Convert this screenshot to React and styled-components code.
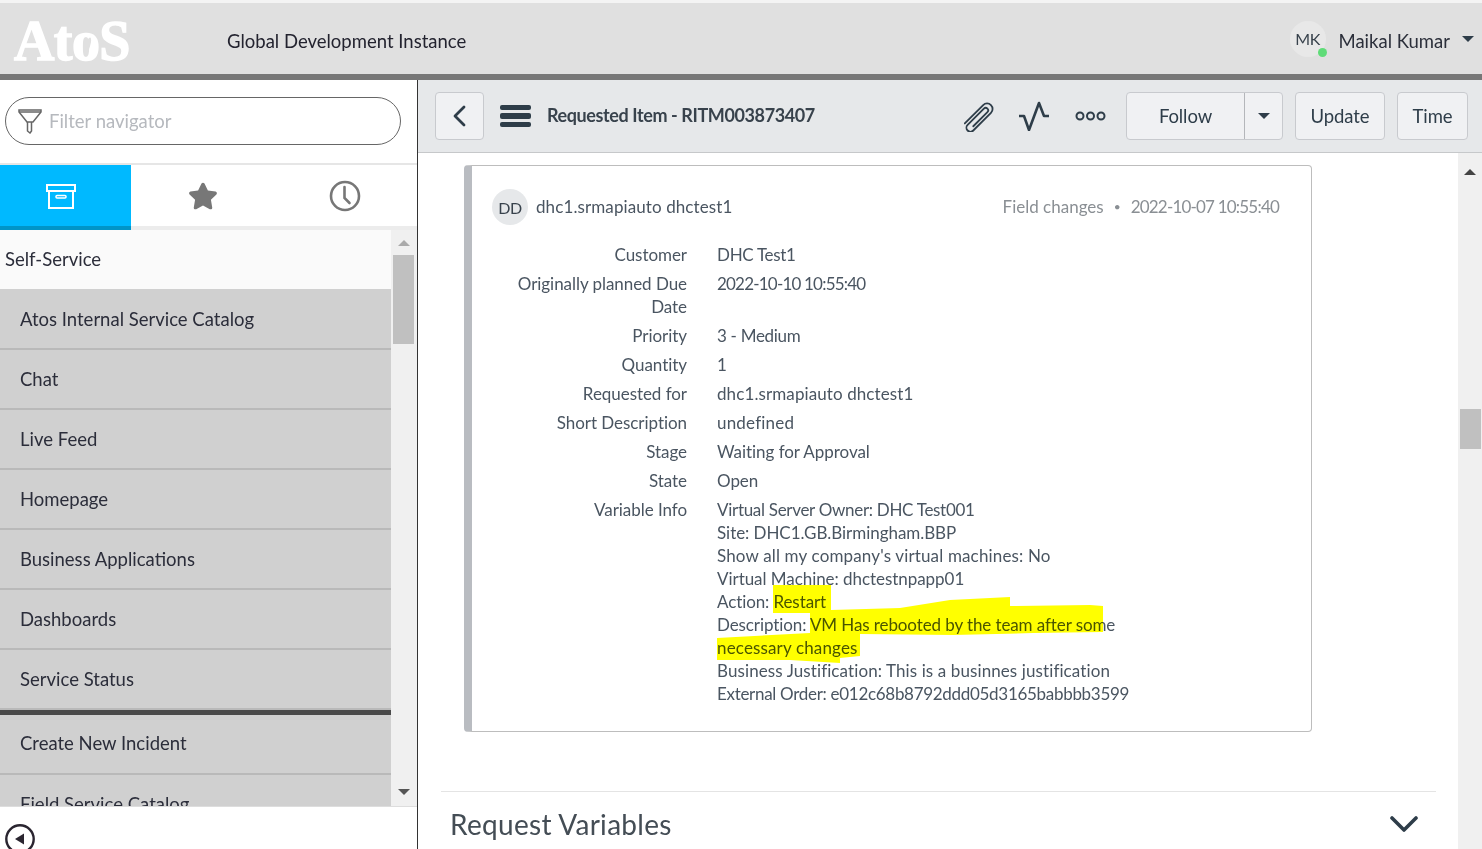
import React from "react";
import styled, { createGlobalStyle } from "styled-components";
import { FaStar } from "react-icons/fa";

const FONT = `Lato, "Noto Sans", sans-serif`;

const GlobalStyle = createGlobalStyle`
  html, body {
    margin: 0;
    height: 100%;
    overflow: hidden;
    background: #fff;
    font-family: ${FONT};
  }
  * { box-sizing: border-box; }
`;

const Page = styled.div`
  position: relative;
  display: flex;
  flex-direction: column;
  height: 849px;
  overflow: hidden;
`;

const Header = styled.header`
  flex: none;
  height: 80px;
  display: flex;
  align-items: center;
  padding: 0 8px 0 14px;
  background: #e0e0e0;
  border-top: 3px solid #f4f4f4;
  border-bottom: 6px solid #777;
`;

const Logo = styled.div`
  width: 213px;
  margin-top: 5px;
  font: bold 56px/1 "Liberation Serif", serif;
  letter-spacing: -0.6px;
  color: #fff;
  -webkit-text-stroke: 1.4px #fff;
`;

const LogoO = styled.span`
  position: relative;
  &::after {
    content: "";
    position: absolute;
    left: 13px;
    top: 27px;
    width: 5px;
    height: 18px;
    border-radius: 50%;
    background: #e0e0e0;
    transform: rotate(18deg);
  }
`;

const InstanceName = styled.div`
  flex: 1;
  margin-top: 4px;
  font-size: 18.5px;
  color: #23232f;
`;

const Avatar = styled.div`
  position: relative;
  width: ${p => p.size}px;
  height: ${p => p.size}px;
  flex: none;
  display: flex;
  align-items: center;
  justify-content: center;
  border-radius: 50%;
  background: ${p => p.bg};
  font-size: 16px;
  letter-spacing: -0.4px;
  color: #38424c;
`;

const OnlineDot = styled.span`
  position: absolute;
  right: -1px;
  bottom: 0;
  width: 9px;
  height: 9px;
  border-radius: 50%;
  background: #5fdc78;
`;

const UserName = styled.div`
  margin: 4px 0 0 13px;
  font-size: 18.5px;
  color: #2b2f3a;
`;

const Caret = styled.span`
  display: inline-block;
  margin-left: ${p => p.gap || 0}px;
  border-left: 6px solid transparent;
  border-right: 6px solid transparent;
  border-top: 6px solid #2e3d49;
`;

const Body = styled.div`
  flex: 1;
  min-height: 0;
  display: flex;
`;

const Sidebar = styled.aside`
  flex: none;
  width: 418px;
  display: flex;
  flex-direction: column;
  border-right: 1px solid #333;
`;

const FilterArea = styled.div`
  flex: none;
  height: 85px;
  padding: 17px 16px 0 5px;
  border-bottom: 2px solid #e6e6e6;
`;

const FilterBox = styled.div`
  height: 48px;
  display: flex;
  align-items: center;
  gap: 7px;
  padding-left: 12px;
  border: 1px solid #666;
  border-radius: 24px;
`;

const Placeholder = styled.span`
  font-size: 18.5px;
  color: #b6b9be;
`;

const Tabs = styled.div`
  flex: none;
  height: 65px;
  display: grid;
  grid-template-columns: 131px 144px 1fr;
`;

const Tab = styled.div`
  display: flex;
  align-items: center;
  justify-content: center;
  padding: 1px ${p => p.pr || 0}px 0 0;
  background: ${p => (p.active ? "#00b9ff" : "#fff")};
  border-bottom: 4px solid ${p => (p.active ? "#0095c8" : "#ececec")};
  color: #777;
`;

const NavWrap = styled.div`
  flex: 1;
  min-height: 0;
  display: flex;
`;

const NavList = styled.nav`
  flex: 1;
  overflow: hidden;
`;

const NavGroup = styled.div`
  height: 59px;
  display: flex;
  align-items: center;
  padding: 0 0 2px 5px;
  background: #fafafa;
  font-size: 18.5px;
  color: #2b2d3a;
`;

const NavItem = styled.div`
  height: ${p => p.h || 60}px;
  display: flex;
  align-items: center;
  padding: 0 0 ${p => p.pb || 0}px 20px;
  background: #d0d0d0;
  border-bottom: 2px solid #b9b9b9;
  font-size: 18.5px;
  color: #2b2d3a;
  white-space: nowrap;
`;

const NavSeparator = styled.div`
  height: 5px;
  background: #4a4a4a;
`;

const ScrollTrack = styled.div`
  flex: none;
  width: ${p => p.w}px;
  display: flex;
  flex-direction: column;
  align-items: center;
  padding: ${p => p.top}px ${p => p.pr || 0}px 0 0;
  background: #f0f0f0;
`;

const ArrowUp = styled.span`
  flex: none;
  border-left: 6px solid transparent;
  border-right: 6px solid transparent;
  border-bottom: 6px solid ${p => p.color};
`;

const ArrowDown = styled.span`
  flex: none;
  margin-top: auto;
  margin-bottom: 11px;
  border-left: 6px solid transparent;
  border-right: 6px solid transparent;
  border-top: 6px solid #555;
`;

const Thumb = styled.div`
  flex: none;
  width: 21px;
  height: ${p => p.h}px;
  margin-top: ${p => p.top}px;
  background: #c0c0c0;
`;

const SideFooter = styled.div`
  flex: none;
  height: 43px;
  padding: 17px 0 0 5px;
  overflow: hidden;
  border-top: 1px solid #ddd;
`;

const Main = styled.main`
  flex: 1;
  min-width: 0;
  display: flex;
  flex-direction: column;
`;

const Toolbar = styled.div`
  flex: none;
  height: 73px;
  display: flex;
  align-items: center;
  padding: 0 14px 0 17px;
  background: #e6e8ea;
  border-bottom: 1px solid #c6c8ca;
`;

const ToolButton = styled.div`
  flex: none;
  height: 48px;
  width: ${p => p.w}px;
  margin-left: ${p => p.gap || 0}px;
  display: flex;
  align-items: center;
  justify-content: center;
  background: #f0f1f3;
  border: 1px solid #c8cace;
  border-radius: 4px;
  font-size: 18.5px;
  letter-spacing: -0.1px;
  color: #2e3d49;
`;

const SplitButton = styled.div`
  flex: none;
  display: flex;
  height: 48px;
  margin-left: 20px;
  background: #f0f1f3;
  border: 1px solid #c8cace;
  border-radius: 4px;
  font-size: 18.5px;
  letter-spacing: -0.1px;
  color: #2e3d49;
`;

const SplitPart = styled.div`
  width: ${p => p.w}px;
  display: flex;
  align-items: center;
  justify-content: center;
  border-left: ${p => (p.divided ? "1px solid #b4b6ba" : "none")};
`;

const Hamburger = styled.div`
  flex: none;
  width: 31px;
  margin-left: 16px;
  display: flex;
  flex-direction: column;
  gap: 3px;
`;

const HamburgerBar = styled.span`
  height: 5.5px;
  border-radius: 2px;
  background: #2e3d49;
`;

const Title = styled.h1`
  flex: 1;
  margin: 0 0 2px 16px;
  font-size: 18px;
  font-weight: 700;
  letter-spacing: -0.4px;
  color: #38424c;
`;

const IconSlot = styled.div`
  flex: none;
  display: flex;
  margin-left: ${p => p.gap}px;
`;

const Content = styled.div`
  flex: 1;
  min-height: 0;
  display: flex;
`;

const Scroller = styled.div`
  flex: 1;
  min-width: 0;
  overflow: hidden;
  padding: 12px 22px 0 23px;
`;

const Card = styled.section`
  width: 848px;
  height: 567px;
  margin-left: 23px;
  padding: 23px 32px 0 20px;
  border: 1px solid #bdbdbd;
  border-left: 8px solid #b9bcc1;
  border-radius: 4px;
`;

const CardHead = styled.div`
  display: flex;
  align-items: center;
  gap: 8px;
  margin-bottom: 18px;
`;

const Author = styled.div`
  flex: 1;
  padding-bottom: 2px;
  font-size: 17px;
  letter-spacing: 0.1px;
  color: #4a5561;
`;

const Meta = styled.div`
  display: flex;
  align-items: center;
  gap: 10px;
  padding-bottom: 2px;
  font-size: 17px;
  color: #8a8f94;
`;

const MetaDot = styled.span`
  font-size: 12px;
`;

const MetaDate = styled.span`
  letter-spacing: -0.8px;
`;

const FieldList = styled.dl`
  margin: 0 0 0 -20px;
  display: grid;
  grid-template-columns: 215px 1fr;
  column-gap: 30px;
  row-gap: 6px;
  font-size: 17px;
  line-height: 23px;
  letter-spacing: -0.05px;
  color: #4a5561;
`;

const FieldLabel = styled.dt`
  padding-left: 33px;
  text-align: right;
`;

const FieldValue = styled.dd`
  margin: 0;
  white-space: nowrap;
`;

const Line = styled.div`
  letter-spacing: ${p => p.track ?? -0.05}px;
`;

const SectionHead = styled.div`
  height: 70px;
  margin-top: 59px;
  display: flex;
  align-items: center;
  justify-content: space-between;
  padding: 0 18px 5px 9px;
  border-top: 1px solid #e4e4e4;
`;

const SectionTitle = styled.h2`
  margin: 0;
  font-size: 28px;
  font-weight: 400;
  letter-spacing: 0.3px;
  color: #444d55;
`;

const Highlighter = styled.svg`
  position: absolute;
  left: 0;
  top: 0;
  mix-blend-mode: multiply;
  pointer-events: none;
`;

const navItems = [
  "Chat",
  "Live Feed",
  "Homepage",
  "Business Applications",
  "Dashboards",
  "Service Status",
];

const fields = [
  ["Customer", "DHC Test1", -0.3],
  ["Originally planned Due Date", "2022-10-10 10:55:40", -0.8],
  ["Priority", "3 - Medium", -0.3],
  ["Quantity", "1"],
  ["Requested for", "dhc1.srmapiauto dhctest1", 0.1],
  ["Short Description", "undefined", 0.2],
  ["Stage", "Waiting for Approval"],
  ["State", "Open"],
];

const variableLines = [
  ["Virtual Server Owner: DHC Test001", -0.3],
  ["Site: DHC1.GB.Birmingham.BBP"],
  ["Show all my company's virtual machines: No", 0.15],
  ["Virtual Machine: dhctestnpapp01"],
  ["Action: Restart", -0.1],
  ["Description: VM Has rebooted by the team after some", -0.1],
  ["necessary changes", 0.15],
  ["Business Justification: This is a businnes justification", 0.1],
  ["External Order: e012c68b8792ddd05d3165babbbb3599", -0.3],
];

const FilterIcon = () => (
  <svg width="24" height="26" viewBox="0 0 24 26" fill="none" stroke="#666" strokeWidth="1.5">
    <path d="M1 2h22v2L15 14H9L1 4z" />
    <path d="M1 4h22" />
    <path d="M9.5 14v9l2.5 2 1.5-2v-9" />
  </svg>
);

const ArchiveIcon = () => (
  <svg width="30" height="25" viewBox="0 0 30 25" fill="none" stroke="#fff" strokeWidth="2">
    <rect x="1" y="1" width="28" height="6" />
    <rect x="3" y="7" width="24" height="17" />
    <rect x="10" y="11.5" width="10" height="2.5" rx="1" strokeWidth="1.5" />
  </svg>
);

const ClockIcon = () => (
  <svg width="32" height="32" viewBox="0 0 32 32" fill="none" stroke="#777" strokeWidth="2.6" strokeLinecap="round">
    <circle cx="16" cy="16" r="14" />
    <path d="M15.5 7v11l5 5" />
  </svg>
);

const CollapseIcon = () => (
  <svg width="30" height="30" viewBox="0 0 30 30">
    <circle cx="15" cy="15" r="13.7" fill="none" stroke="#2a2530" strokeWidth="2.4" />
    <path d="M10 15l9-5.5v11z" fill="#2a2530" />
  </svg>
);

const BackIcon = () => (
  <svg width="14" height="22" viewBox="0 0 14 22" fill="none" stroke="#2e3d49" strokeWidth="2.8" strokeLinecap="round" strokeLinejoin="round">
    <path d="M11 2L2 11l9 9" />
  </svg>
);

const ClipIcon = () => (
  <svg width="32" height="32" viewBox="0 0 32 32" fill="none" stroke="#2e3d49" strokeWidth="1.8" strokeLinecap="round">
    <g transform="rotate(45 16 16)">
      <path d="M10.5 32V6a5.5 5.5 0 0 1 11 0v25a4 4 0 0 1-8 0V8a2.5 2.5 0 0 1 5 0v20" />
    </g>
  </svg>
);

const PulseIcon = () => (
  <svg width="32" height="30" viewBox="0 0 32 30" fill="none" stroke="#2e3d49" strokeWidth="2.6" strokeLinejoin="round">
    <path d="M1 15h5l5 14L21 2l5 13h5" />
  </svg>
);

const DotsIcon = () => (
  <svg width="31" height="10" viewBox="0 0 31 10" fill="none" stroke="#2e3d49" strokeWidth="2">
    <circle cx="5" cy="5" r="3.5" />
    <circle cx="15.5" cy="5" r="3.5" />
    <circle cx="26" cy="5" r="3.5" />
  </svg>
);

const ChevronIcon = () => (
  <svg width="28" height="18" viewBox="0 0 28 18" fill="none" stroke="#2e3d49" strokeWidth="3.6" strokeLinecap="round" strokeLinejoin="round">
    <path d="M2 3l12 12L26 3" />
  </svg>
);

export default function App() {
  return (
    <Page>
      <GlobalStyle />
      <Header>
        <Logo>
          At<LogoO>o</LogoO>S
        </Logo>
        <InstanceName>Global Development Instance</InstanceName>
        <Avatar size={36} bg="#e8e8e8">
          MK
          <OnlineDot />
        </Avatar>
        <UserName>Maikal Kumar</UserName>
        <Caret gap={12} />
      </Header>
      <Body>
        <Sidebar>
          <FilterArea>
            <FilterBox>
              <FilterIcon />
              <Placeholder>Filter navigator</Placeholder>
            </FilterBox>
          </FilterArea>
          <Tabs>
            <Tab active pr={9}>
              <ArchiveIcon />
            </Tab>
            <Tab>
              <FaStar size={30} />
            </Tab>
            <Tab pr={2}>
              <ClockIcon />
            </Tab>
          </Tabs>
          <NavWrap>
            <NavList>
              <NavGroup>Self-Service</NavGroup>
              <NavItem h={61}>Atos Internal Service Catalog</NavItem>
              {navItems.map(item => (
                <NavItem key={item}>{item}</NavItem>
              ))}
              <NavSeparator />
              <NavItem pb={2}>Create New Incident</NavItem>
              <NavItem>Field Service Catalog</NavItem>
            </NavList>
            <ScrollTrack w={26} top={10} pr={1}>
              <ArrowUp color="#aaa" />
              <Thumb h={89} top={9} />
              <ArrowDown />
            </ScrollTrack>
          </NavWrap>
          <SideFooter>
            <CollapseIcon />
          </SideFooter>
        </Sidebar>
        <Main>
          <Toolbar>
            <ToolButton w={49}>
              <BackIcon />
            </ToolButton>
            <Hamburger>
              <HamburgerBar />
              <HamburgerBar />
              <HamburgerBar />
            </Hamburger>
            <Title>Requested Item - RITM003873407</Title>
            <IconSlot gap={0}>
              <ClipIcon />
            </IconSlot>
            <IconSlot gap={22}>
              <PulseIcon />
            </IconSlot>
            <IconSlot gap={25}>
              <DotsIcon />
            </IconSlot>
            <SplitButton>
              <SplitPart w={117}>Follow</SplitPart>
              <SplitPart w={38} divided>
                <Caret />
              </SplitPart>
            </SplitButton>
            <ToolButton w={90} gap={12}>
              Update
            </ToolButton>
            <ToolButton w={71} gap={12}>
              Time
            </ToolButton>
          </Toolbar>
          <Content>
            <Scroller>
              <Card>
                <CardHead>
                  <Avatar size={36} bg="#e6e8ea">
                    DD
                  </Avatar>
                  <Author>dhc1.srmapiauto dhctest1</Author>
                  <Meta>
                    <span>Field changes</span>
                    <MetaDot>•</MetaDot>
                    <MetaDate>2022-10-07 10:55:40</MetaDate>
                  </Meta>
                </CardHead>
                <FieldList>
                  {fields.map(([label, value, track]) => (
                    <React.Fragment key={label}>
                      <FieldLabel>{label}</FieldLabel>
                      <FieldValue>
                        <Line track={track}>{value}</Line>
                      </FieldValue>
                    </React.Fragment>
                  ))}
                  <FieldLabel>Variable Info</FieldLabel>
                  <FieldValue>
                    {variableLines.map(([line, track]) => (
                      <Line key={line} track={track}>
                        {line}
                      </Line>
                    ))}
                  </FieldValue>
                </FieldList>
              </Card>
              <SectionHead>
                <SectionTitle>Request Variables</SectionTitle>
                <ChevronIcon />
              </SectionHead>
            </Scroller>
            <ScrollTrack w={24} top={16}>
              <ArrowUp color="#444" />
              <Thumb h={40} top={234} />
            </ScrollTrack>
          </Content>
        </Main>
      </Body>
      <Highlighter width="1482" height="849" viewBox="0 0 1482 849">
        <path
          fill="#ffff00"
          d="M773 585H831V610L900 608 950 600 1010 597V606L1090 605 1103 606V632L1033 633 953 635 860 634V656L840 658V663L790 660H717V638L810 633V613H773z"
        />
      </Highlighter>
    </Page>
  );
}
